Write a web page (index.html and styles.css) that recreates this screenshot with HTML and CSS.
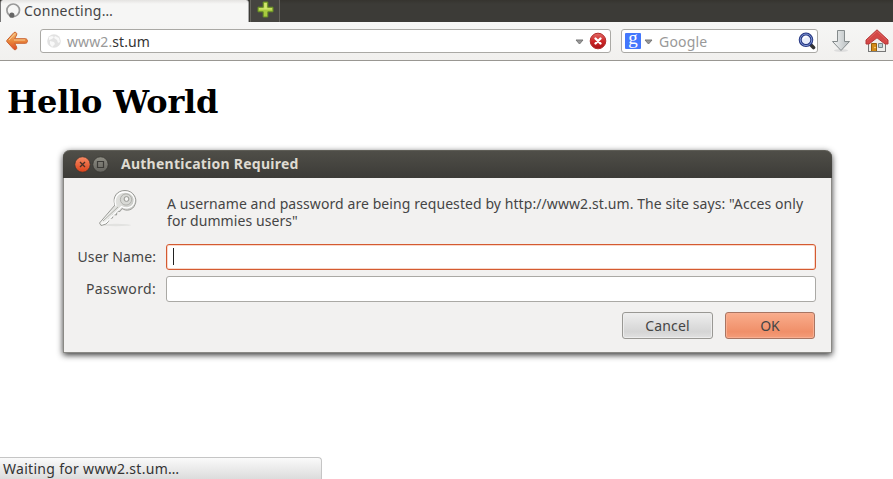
FILE: index.html
```
<!DOCTYPE html>
<html lang="en">
<head>
<meta charset="utf-8">
<title>Connecting…</title>
<link rel="stylesheet" href="styles.css">
</head>
<body>
<header class="tabs">
  <div class="tab">
    <svg class="spinner" width="17" height="17" viewBox="0 0 17 17"><circle cx="8.2" cy="7.3" r="6.3" fill="none" stroke="#999" stroke-width="1.7"/><circle cx="6.8" cy="12.2" r="2.6" fill="#656565"/></svg>
    <span class="tab-title">Connecting…</span>
  </div>
  <div class="new-tab">
    <svg width="17" height="17" viewBox="0 0 17 17"><path d="M6.2 1h4.6v5.2H16v4.6h-5.2V16H6.2v-5.2H1V6.2h5.2z" fill="#a8ca3f" stroke="#668d25"/><path d="M7.2 2h2.6v5.2H15v1.4H2V7.2h5.2z" fill="#d3e76f"/></svg>
  </div>
</header>
<nav class="toolbar">
  <svg class="back" width="24" height="20" viewBox="0 0 24 20">
    <defs><linearGradient id="orange" x2="0" y2="1"><stop stop-color="#f5ba74"/><stop offset=".55" stop-color="#e88238"/><stop offset="1" stop-color="#df4b2c"/></linearGradient></defs>
    <path d="M9 1.500 2 9.200c-.500.600-.500 1 0 1.600L9 18.500c1.500 1 3.500-.800 2.600-2.500L9.700 12.300H20.500c2.500 0 2.500-4.600 0-4.600H9.700L11.600 4C12.500 2.300 10.500.500 9 1.500z" fill="url(#orange)" stroke="#ca622f"/>
    <path d="M4 9l5.500-6M9 9h11" fill="none" stroke="#f8cc91" stroke-width="1"/>
  </svg>
  <div class="field address">
    <svg width="14" height="14" viewBox="0 0 14 14"><circle cx="7" cy="7" r="6.800" fill="#e2e2e2"/><path d="M2 3l3-1 2 1-2 2-3 1zM8 2l4 2 1 4-2 1-1-3-3-2zM3 7l4 1 1 2-3 3-2-3z" fill="#f9f9f9"/></svg>
    <span class="url"><span>www2.</span>st.um</span>
    <svg class="chevron" width="9" height="6" viewBox="0 0 9 6"><path d="M1 1h7L4.500 5z" fill="#999" stroke="#777"/></svg>
    <svg class="stop" width="18" height="18" viewBox="0 0 18 18">
      <defs><linearGradient id="red" x2="0" y2="1"><stop stop-color="#e16b68"/><stop offset=".5" stop-color="#ce2728"/><stop offset="1" stop-color="#a91218"/></linearGradient></defs>
      <circle cx="9" cy="9" r="7.800" fill="url(#red)" stroke="#b22e2e"/><path d="M6.500 6.500l5 5m0-5-5 5" stroke="#fff" stroke-width="2.400" stroke-linecap="round"/></svg>
  </div>
  <div class="field search">
    <span class="engine">g</span>
    <svg class="search-menu" width="9" height="6" viewBox="0 0 9 6"><path d="M1 1h7L4.500 5z" fill="#999" stroke="#777"/></svg>
    <span class="placeholder">Google</span>
    <svg class="lens" width="18" height="18" viewBox="0 0 18 18"><path d="M12.500 12.500l3 3" stroke="#333" stroke-width="3.600" stroke-linecap="round"/><circle cx="8" cy="7.800" r="5.800" fill="#e8edfb" stroke="#253682" stroke-width="3"/><circle cx="8" cy="7.800" r="5.800" fill="none" stroke="#7e96d4" stroke-width="1"/><path d="M5.500 7c0-2 2-3 4-2" fill="none" stroke="#fff" stroke-width="1.500"/></svg>
  </div>
  <svg class="download" width="20" height="24" viewBox="0 0 20 24">
    <defs><linearGradient id="silver"><stop stop-color="#f4f5f5"/><stop offset="1" stop-color="#b5bbbd"/></linearGradient></defs>
    <ellipse cx="10" cy="21.500" rx="7" ry="1.500" fill="#ddd"/><path d="M6.500 1.500h7v11h5L10 21.500 1.500 12.500h5z" fill="url(#silver)" stroke="#858b8c" stroke-linejoin="round"/></svg>
  <svg class="home" width="24" height="25" viewBox="0 0 24 25">
    <path d="M3.500 11 12 4l8.500 7v11.500h-17z" fill="#eeeeeb" stroke="#777"/><path d="M1 11 12 .8 23 11v4h-3L12 8.800 4 15H1z" fill="#d44746" stroke="#b53738" stroke-linejoin="round"/><path d="M2 11.500 12 2.200l10 9.300" fill="none" stroke="#de6866" stroke-width=".8"/><path d="M6.500 14.500h5v8h-5z" fill="#d38b18" stroke="#98600b"/><path d="M13.500 14.500h4v4h-4z" fill="#bad0d4" stroke="#778487"/><circle cx="10" cy="18.500" r=".8" fill="#ffe18a"/><path d="M3 22.500h18" stroke="#777"/></svg>
</nav>
<main class="page">
  <h1>Hello World</h1>
  <section class="dialog">
    <header class="titlebar">
      <div class="controls">
        <svg width="35" height="17" viewBox="0 0 35 17"><defs><linearGradient id="close" x2="0" y2="1"><stop stop-color="#f78b65"/><stop offset="1" stop-color="#dc4219"/></linearGradient><linearGradient id="maximize" x2="0" y2="1"><stop stop-color="#8e8d84"/><stop offset="1" stop-color="#65645e"/></linearGradient></defs><circle cx="8.500" cy="8.500" r="7.700" fill="url(#close)" stroke="#33322e" stroke-width=".7"/><path d="M6 6l5 5m0-5-5 5" stroke="#493026" stroke-width="1.300"/><circle cx="26.500" cy="8.500" r="7.700" fill="url(#maximize)" stroke="#33322e" stroke-width=".7"/><path d="M23.500 5.500h6v6h-6z" fill="none" stroke="#3c3b37" stroke-width="1.200"/></svg>
      </div>
      <h2>Authentication Required</h2>
    </header>
    <div class="message">
      <svg class="key" width="42" height="40" viewBox="0 0 42 40">
        <defs><linearGradient id="metal"><stop stop-color="#f6f6f4"/><stop offset="1" stop-color="#c9cac6"/></linearGradient></defs>
        <ellipse cx="18" cy="36" rx="15" ry="1.200" fill="#e2e2e0"/>
        <path d="M17 16C14 8 19 1.500 27 1.500c8 0 13 8 10 14-2 6-9 7-13 4l-2 3-3-.500-.500 4-3.500-.500-.500 3.500-3.500.500-.500 3L8 35l-5 1.500L1.500 34z" fill="url(#metal)" stroke="#9a9b97"/>
        <path d="M18 17C15 9 20 3 27 3c7 0 11 6 8.500 12-2 4-8 5-12 2.500L8 33.500 4 35" fill="none" stroke="#fff" stroke-width="1.300"/>
        <circle cx="28" cy="10.500" r="5.600" fill="#d8d9d5" stroke="#afb0ac"/><circle cx="28.500" cy="10" r="2.400" fill="#f5f5f3" stroke="#969793"/><path d="M5 32l15-14" stroke="#adaea9"/></svg>
      <div class="prompt">
        <p>A username and password are being requested by http://www2.st.um. The site says: "Acces only</p>
        <p>for dummies users"</p>
      </div>
    </div>
    <form class="form">
      <label class="user-label">User Name:</label><div class="input focused"><span class="caret"></span></div>
      <label class="password-label">Password:</label><div class="input"></div>
    </form>
    <footer class="actions"><button class="button cancel" type="button"><span>Cancel</span></button><button class="button ok" type="button"><span>OK</span></button></footer>
  </section>
</main>
<footer class="status"><span>Waiting for www2.st.um…</span></footer>
</body>
</html>
```
FILE: styles.css
```
* { box-sizing: border-box; }
body {
  display: flex;
  flex-direction: column;
  height: 479px;
  margin: 0;
  overflow: hidden;
  background: #fff;
  color: #454545;
  font: 14px/17px "Noto Sans", sans-serif;
}
svg { display: block; flex: none; }
.tabs {
  display: flex;
  height: 22px;
  flex: none;
  background: linear-gradient(#36342f, #3c3b37 4px);
}
.tab {
  display: flex;
  width: 249px;
  height: 22px;
  padding: 2px 5px;
  border-left: 1px solid #777;
  border-right: 1px solid #aaa;
  border-radius: 3px 3px 0 0;
  background: linear-gradient(#e4e3e1, #f6f6f5 4px);
}
.spinner { margin: 1px 0 0 -1px; }
.tab-title { margin-left: 2px; letter-spacing: .25px; }
.new-tab {
  width: 30px;
  margin-left: 1px;
  padding: 1px 0 0 6px;
  border-left: 1px solid #65645d;
  border-right: 1px solid #66645e;
  background: #454440;
}
.toolbar {
  display: flex;
  flex: none;
  align-items: flex-start;
  height: 39px;
  padding: 7px 0 0 5px;
  border-bottom: 1px solid #999792;
  background: linear-gradient(#f6f6f5, #f1f0ee);
}
.back { margin-top: 2px; }
.field {
  display: flex;
  align-items: center;
  height: 24px;
  border: 1px solid #aaa9a5;
  border-radius: 3px;
  background: #fff;
}
.address { width: 571px; margin-left: 11px; padding: 0 3px 0 6px; }
.url { margin-left: 6px; color: #333; letter-spacing: .1px; }
.url span, .placeholder { color: #999; }
.chevron { margin: 2px 0 0 auto; }
.stop { margin-left: 5px; }
.search { width: 197px; margin-left: 10px; padding: 0 1px 0 3px; }
.engine {
  width: 16px;
  height: 16px;
  border-radius: 1px;
  background: #4377fd;
  color: #fff;
  font: 19px/9px "Liberation Serif", serif;
  text-align: center;
}
.search-menu { margin: 2px 0 0 3px; }
.placeholder { margin-left: 6px; letter-spacing: .2px; }
.lens { margin-left: auto; }
.download { margin-left: 13px; }
.home { margin-left: 14px; }
.page { flex: 1; }
h1 {
  margin: 22px 0 0 7px;
  color: #000;
  font: bold 32px/38px "DejaVu Serif", serif;
  letter-spacing: -.2px;
}
.dialog {
  display: flex;
  flex-direction: column;
  width: 769px;
  height: 203px;
  margin: 29px 0 0 63px;
  border: 1px solid #8a8985;
  border-top: 0;
  border-radius: 7px 7px 1px 1px;
  background: #f2f1f0;
  box-shadow: 0 2px 6px #333;
}
.titlebar {
  display: flex;
  height: 28px;
  margin: 0 -1px;
  padding: 5px 0 0 11px;
  border-top: 1px solid #5e5d56;
  border-radius: 7px 7px 0 0;
  background: linear-gradient(#4f4e48, #3c3b37);
}
h2 {
  margin: -1px 0 0 12px;
  color: #dfdbd2;
  font: bold 14px/17px "Noto Sans", sans-serif;
  letter-spacing: .25px;
}
.message { display: flex; height: 66px; padding: 11px 0 0 34px; }
.prompt { margin: 6px 0 0 27px; white-space: nowrap; letter-spacing: .078px; }
.prompt p { margin: 0; }
.form {
  display: grid;
  grid-template-columns: 79px 650px;
  grid-template-rows: 26px 26px;
  gap: 6px 10px;
  margin: 0 0 0 13px;
}
label { justify-self: end; margin-top: 4px; white-space: nowrap; letter-spacing: .1px; }
.password-label { letter-spacing: .33px; }
.input { padding: 3px 6px; border: 1px solid #aaa9a5; border-radius: 3px; background: #fff; }
.focused { border-color: #d45a31; box-shadow: inset 0 0 0 1px #f9d8ca; }
.caret { display: block; width: 1px; height: 17px; background: #222; }
.actions { display: flex; gap: 12px; justify-content: flex-end; padding: 10px 16px 0 0; }
.button {
  width: 91px;
  height: 27px;
  padding: 0;
  border: 1px solid #999894;
  border-radius: 3px;
  background: linear-gradient(#eee, #d5d5d5 75%, #e1e1e1);
  box-shadow: inset 0 0 0 1px #ededed;
  color: #454545;
  font: 14px/17px "Noto Sans", sans-serif;
}
.cancel { letter-spacing: .15px; }
.ok {
  width: 90px;
  border-color: #a87562;
  background: linear-gradient(#f9ad8c, #f08f69 75%, #f49d7a);
  box-shadow: inset 0 0 0 1px #f8ae91;
}
.status {
  width: 322px;
  height: 22px;
  flex: none;
  padding: 2px 3px 0;
  border: 1px solid #c5c5c5;
  border-width: 1px 1px 0 0;
  border-radius: 0 4px 0 0;
  background: linear-gradient(#fafafa, #dcdcdc);
  color: #333;
  letter-spacing: .3px;
}
```
